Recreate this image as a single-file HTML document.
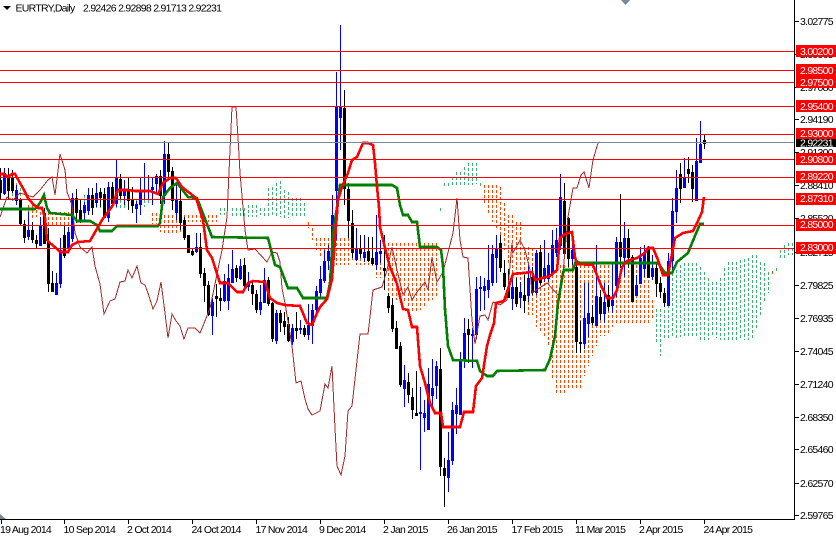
<!DOCTYPE html>
<html><head><meta charset="utf-8"><title>EURTRY,Daily</title>
<style>
html,body{margin:0;padding:0;background:#fff;width:836px;height:536px;overflow:hidden}
svg{display:block;position:absolute;left:0;top:0}
text{font-family:"Liberation Sans",sans-serif;font-size:10.5px;letter-spacing:-.72px;fill:#000}
.w text{fill:#fff}
.c{fill:none;stroke-width:1;stroke-dasharray:3 2;shape-rendering:crispEdges}
.l{fill:none;shape-rendering:crispEdges}
</style></head><body>
<svg width="836" height="536" viewBox="0 0 836 536" xmlns="http://www.w3.org/2000/svg">
<rect width="836" height="536" fill="#fff"/>
<!-- cloud -->
<path class="c" stroke="#ff4500" d="M28.5 205V220M32.5 205V220M36.5 210V217M40.5 212V225M44.5 212V225M48.5 212V225M52.5 212V225M56.5 212V225M60.5 212V225M64.5 212V225M68.5 212V225M72.5 212V223M152.5 213V224M156.5 213V224M160.5 215V232M164.5 215V235M168.5 215V235M172.5 215V235M176.5 215V235M180.5 215V232M184.5 215V225M188.5 215V222M192.5 215V222M196.5 215V222M200.5 215V222M204.5 215V222M208.5 215V222M212.5 215V222M216.5 215V222M308.5 222V228M312.5 228V240M316.5 238V250M320.5 238V257M324.5 238V260M328.5 238V265M332.5 238V265M336.5 238V265M340.5 238V265M344.5 238V265M348.5 238V265M352.5 238V260M356.5 238V265M360.5 238V265M364.5 238V265M368.5 238V265M372.5 238V267M376.5 242V278M380.5 242V278M384.5 242V287M388.5 243V293M392.5 243V297M396.5 243V300M400.5 243V302M404.5 243V303M408.5 243V307M412.5 243V312M416.5 243V312M420.5 243V310M424.5 243V307M428.5 243V303M432.5 243V300M436.5 243V298M484.5 185V205M488.5 185V213M492.5 185V222M496.5 185V230M500.5 187V240M504.5 203V250M508.5 215V265M512.5 215V273M516.5 222V280M520.5 222V285M524.5 247V293M528.5 247V315M532.5 248V315M536.5 250V327M540.5 253V332M544.5 263V338M548.5 267V345M552.5 265V380M556.5 265V394M560.5 265V394M564.5 265V394M568.5 265V388M572.5 265V388M576.5 265V388M580.5 265V388M584.5 265V376M588.5 265V366M592.5 265V356M596.5 265V346M600.5 265V336M604.5 265V336M608.5 265V333M612.5 265V327M616.5 265V323M620.5 265V323M624.5 265V323M628.5 265V323M632.5 265V323M636.5 265V323M640.5 265V323M644.5 265V323M648.5 265V323M652.5 300V318M772.5 271V274"/>
<path class="c" stroke="#3cb371" d="M12.5 183V203M16.5 183V203M20.5 183V203M84.5 195V215M88.5 195V213M92.5 190V212M96.5 190V210M100.5 190V210M104.5 190V208M108.5 185V207M112.5 195V210M116.5 197V208M120.5 200V208M124.5 200V208M128.5 200V208M132.5 200V206M136.5 200V206M140.5 200V206M144.5 200V207M148.5 200V205M220.5 208V215M224.5 208V215M232.5 208V216M236.5 208V216M240.5 208V216M244.5 208V217M248.5 205V217M252.5 205V217M256.5 205V217M260.5 208V215M264.5 208V216M268.5 188V217M272.5 187V215M276.5 183V217M280.5 181V217M284.5 190V218M288.5 192V218M292.5 198V218M296.5 198V218M300.5 198V217M304.5 203V217M440.5 208V211M444.5 183V186M448.5 183V186M452.5 177V186M456.5 172V186M460.5 172V186M464.5 167V186M468.5 163V185M472.5 163V185M476.5 163V184M480.5 183V186M656.5 309V342M660.5 309V356M664.5 310V340M668.5 290V340M672.5 273V338M676.5 270V338M680.5 265V337M684.5 263V337M688.5 263V336M692.5 263V336M696.5 263V337M700.5 267V340M704.5 272V340M708.5 278V340M712.5 282V336M716.5 282V338M720.5 278V340M724.5 268V340M728.5 262V340M732.5 262V340M736.5 262V340M740.5 260V340M744.5 259V340M748.5 258V340M752.5 255V340M756.5 255V330M760.5 262V315M764.5 263V302M768.5 272V293M776.5 268V272M780.5 250V258M784.5 245V258M788.5 243V255M792.5 243V255"/>
<!-- candles -->
<path class="l" stroke="#00f" d="M4.5 168V195M16.5 185V205M28.5 212V240M40.5 217V246M56.5 273V295M60.5 238V288M68.5 227V250M72.5 193V242M84.5 202V222M88.5 188V215M96.5 183V207M108.5 182V222M116.5 160V207M124.5 180V205M136.5 201V223M140.5 177V215M144.5 163V200M148.5 175V200M152.5 177V205M156.5 174V192M164.5 141V204M176.5 182V220M196.5 233V253M212.5 298V335M224.5 274V302M228.5 264V310M232.5 250V282M240.5 259V280M248.5 272V291M260.5 285V315M264.5 268V303M276.5 310V344M292.5 324V345M300.5 320V334M308.5 304V340M312.5 304V344M316.5 286V316M320.5 266V298M324.5 250V283M328.5 245V270M332.5 195V263M336.5 72V240M340.5 25V150M356.5 228V261M364.5 235V262M376.5 215V270M380.5 240V263M404.5 365V407M420.5 387V470M424.5 400V432M428.5 368V429M432.5 359V406M436.5 361V399M448.5 432V492M452.5 402V465M456.5 388V434M460.5 352V415M464.5 318V368M472.5 328V368M476.5 277V339M480.5 276V311M484.5 278V310M488.5 245V298M492.5 245V286M496.5 235V283M512.5 277V310M520.5 282V308M528.5 265V302M536.5 250V295M544.5 240V282M548.5 253V282M552.5 230V275M556.5 228V257M560.5 174V250M572.5 245V265M584.5 283V349M588.5 283V337M596.5 245V325M604.5 283V323M612.5 264V313M616.5 237V297M624.5 222V277M636.5 275V296M640.5 247V283M644.5 245V277M652.5 255V280M668.5 253V305M672.5 198V270M676.5 170V223M684.5 158V188M696.5 138V201M700.5 121V162"/>
<path class="l" stroke="#000" d="M0.5 168V200M8.5 168V200M12.5 170V193M20.5 198V225M24.5 220V243M32.5 222V243M36.5 235V248M44.5 208V243M48.5 228V292M52.5 271V292M64.5 225V258M76.5 189V223M80.5 200V223M92.5 188V215M100.5 188V207M104.5 188V218M112.5 182V205M120.5 174V200M128.5 178V210M132.5 187V213M160.5 170V204M168.5 143V178M172.5 167V210M180.5 188V230M184.5 217V240M188.5 235V253M192.5 248V256M200.5 233V278M204.5 268V302M208.5 281V316M216.5 284V317M220.5 288V311M236.5 265V282M244.5 258V290M252.5 282V305M256.5 290V313M268.5 277V306M272.5 302V342M280.5 310V332M284.5 312V335M288.5 317V342M296.5 312V339M304.5 325V337M344.5 90V205M348.5 183V238M352.5 210V258M360.5 235V258M368.5 237V262M372.5 237V265M384.5 235V290M388.5 293V313M392.5 298V332M396.5 321V349M400.5 342V387M408.5 373V403M412.5 388V419M416.5 371V416M440.5 348V476M444.5 458V507M468.5 319V363M500.5 235V272M504.5 260V290M508.5 269V298M516.5 278V307M524.5 275V313M532.5 267V295M540.5 245V285M564.5 183V255M568.5 217V267M576.5 265V353M580.5 321V353M592.5 305V325M600.5 290V320M608.5 285V311M620.5 194V268M628.5 229V268M632.5 255V301M648.5 246V278M656.5 263V297M660.5 277V298M664.5 288V307M680.5 163V203M688.5 157V183M692.5 165V202M704.5 135V149"/>
<path class="l" fill="#fff" stroke="#00f" d="M3.5 173.5h2V193.5h-2zM15.5 190.5h2V200.5h-2zM27.5 230.5h2V236.5h-2zM39.5 225.5h2V245.5h-2zM55.5 283.5h2V294.5h-2zM59.5 250.5h2V283.5h-2zM67.5 232.5h2V248.5h-2zM71.5 198.5h2V238.5h-2zM83.5 205.5h2V212.5h-2zM87.5 195.5h2V210.5h-2zM95.5 193.5h2V202.5h-2zM107.5 187.5h2V217.5h-2zM115.5 178.5h2V203.5h-2zM123.5 190.5h2V195.5h-2zM135.5 204.5h2V208.5h-2zM139.5 190.5h2V204.5h-2zM143.5 190.5h2V191.5h-2zM147.5 190.5h2V191.5h-2zM151.5 187.5h2V189.5h-2zM155.5 176.5h2V183.5h-2zM163.5 154.5h2V195.5h-2zM175.5 200.5h2V212.5h-2zM195.5 247.5h2V251.5h-2zM211.5 302.5h2V315.5h-2zM223.5 281.5h2V300.5h-2zM227.5 278.5h2V300.5h-2zM231.5 269.5h2V282.5h-2zM239.5 266.5h2V278.5h-2zM247.5 283.5h2V286.5h-2zM259.5 302.5h2V309.5h-2zM263.5 280.5h2V302.5h-2zM275.5 313.5h2V340.5h-2zM291.5 328.5h2V341.5h-2zM299.5 328.5h2V329.5h-2zM307.5 325.5h2V334.5h-2zM311.5 310.5h2V325.5h-2zM315.5 291.5h2V309.5h-2zM319.5 279.5h2V292.5h-2zM323.5 261.5h2V280.5h-2zM327.5 251.5h2V260.5h-2zM331.5 215.5h2V255.5h-2zM335.5 107.5h2V190.5h-2zM339.5 107.5h2V117.5h-2zM355.5 249.5h2V259.5h-2zM363.5 252.5h2V257.5h-2zM375.5 252.5h2V264.5h-2zM379.5 251.5h2V253.5h-2zM403.5 380.5h2V388.5h-2zM419.5 412.5h2V413.5h-2zM423.5 413.5h2V417.5h-2zM427.5 384.5h2V429.5h-2zM431.5 388.5h2V395.5h-2zM435.5 366.5h2V385.5h-2zM447.5 460.5h2V477.5h-2zM451.5 410.5h2V460.5h-2zM455.5 405.5h2V413.5h-2zM459.5 359.5h2V414.5h-2zM463.5 333.5h2V360.5h-2zM471.5 334.5h2V335.5h-2zM475.5 289.5h2V334.5h-2zM479.5 287.5h2V288.5h-2zM483.5 286.5h2V290.5h-2zM487.5 280.5h2V289.5h-2zM491.5 254.5h2V282.5h-2zM495.5 248.5h2V257.5h-2zM511.5 287.5h2V298.5h-2zM519.5 292.5h2V297.5h-2zM527.5 278.5h2V295.5h-2zM535.5 253.5h2V292.5h-2zM543.5 268.5h2V278.5h-2zM547.5 265.5h2V278.5h-2zM551.5 245.5h2V272.5h-2zM555.5 240.5h2V252.5h-2zM559.5 197.5h2V245.5h-2zM571.5 250.5h2V258.5h-2zM583.5 318.5h2V343.5h-2zM587.5 313.5h2V323.5h-2zM595.5 296.5h2V325.5h-2zM603.5 302.5h2V313.5h-2zM611.5 300.5h2V305.5h-2zM615.5 242.5h2V285.5h-2zM623.5 238.5h2V257.5h-2zM635.5 285.5h2V295.5h-2zM639.5 258.5h2V283.5h-2zM643.5 252.5h2V268.5h-2zM651.5 268.5h2V276.5h-2zM667.5 261.5h2V305.5h-2zM671.5 211.5h2V260.5h-2zM675.5 188.5h2V211.5h-2zM683.5 177.5h2V187.5h-2zM695.5 161.5h2V200.5h-2zM699.5 144.5h2V162.5h-2z"/>
<path class="l" fill="#f00" stroke="#000" d="M-0.5 180.5h2V192.5h-2zM7.5 175.5h2V190.5h-2zM11.5 178.5h2V190.5h-2zM19.5 200.5h2V223.5h-2zM23.5 224.5h2V237.5h-2zM31.5 230.5h2V239.5h-2zM35.5 240.5h2V243.5h-2zM43.5 213.5h2V243.5h-2zM47.5 241.5h2V283.5h-2zM51.5 283.5h2V291.5h-2zM63.5 235.5h2V255.5h-2zM75.5 198.5h2V212.5h-2zM79.5 210.5h2V220.5h-2zM91.5 195.5h2V207.5h-2zM99.5 192.5h2V197.5h-2zM103.5 194.5h2V217.5h-2zM111.5 187.5h2V203.5h-2zM119.5 179.5h2V195.5h-2zM127.5 190.5h2V200.5h-2zM131.5 200.5h2V205.5h-2zM159.5 176.5h2V195.5h-2zM167.5 154.5h2V171.5h-2zM171.5 171.5h2V200.5h-2zM179.5 201.5h2V222.5h-2zM183.5 220.5h2V237.5h-2zM187.5 235.5h2V252.5h-2zM191.5 251.5h2V254.5h-2zM199.5 247.5h2V273.5h-2zM203.5 273.5h2V285.5h-2zM207.5 285.5h2V314.5h-2zM215.5 296.5h2V298.5h-2zM219.5 298.5h2V300.5h-2zM235.5 268.5h2V277.5h-2zM243.5 265.5h2V285.5h-2zM251.5 285.5h2V293.5h-2zM255.5 294.5h2V309.5h-2zM267.5 280.5h2V303.5h-2zM271.5 303.5h2V338.5h-2zM279.5 313.5h2V322.5h-2zM283.5 321.5h2V326.5h-2zM287.5 324.5h2V340.5h-2zM295.5 328.5h2V330.5h-2zM303.5 328.5h2V334.5h-2zM343.5 108.5h2V188.5h-2zM347.5 189.5h2V220.5h-2zM351.5 223.5h2V252.5h-2zM359.5 249.5h2V253.5h-2zM367.5 251.5h2V260.5h-2zM371.5 258.5h2V263.5h-2zM383.5 268.5h2V270.5h-2zM387.5 296.5h2V307.5h-2zM391.5 305.5h2V328.5h-2zM395.5 328.5h2V348.5h-2zM399.5 346.5h2V384.5h-2zM407.5 382.5h2V394.5h-2zM411.5 397.5h2V409.5h-2zM415.5 413.5h2V415.5h-2zM439.5 369.5h2V466.5h-2zM443.5 468.5h2V475.5h-2zM467.5 329.5h2V334.5h-2zM499.5 243.5h2V267.5h-2zM503.5 273.5h2V286.5h-2zM507.5 287.5h2V297.5h-2zM515.5 287.5h2V303.5h-2zM523.5 295.5h2V300.5h-2zM531.5 277.5h2V292.5h-2zM539.5 252.5h2V282.5h-2zM563.5 201.5h2V253.5h-2zM567.5 218.5h2V258.5h-2zM575.5 267.5h2V341.5h-2zM579.5 342.5h2V343.5h-2zM591.5 317.5h2V322.5h-2zM599.5 297.5h2V313.5h-2zM607.5 295.5h2V306.5h-2zM619.5 242.5h2V256.5h-2zM627.5 238.5h2V257.5h-2zM631.5 257.5h2V301.5h-2zM647.5 247.5h2V277.5h-2zM655.5 268.5h2V283.5h-2zM659.5 283.5h2V291.5h-2zM663.5 293.5h2V302.5h-2zM679.5 174.5h2V188.5h-2zM687.5 169.5h2V173.5h-2zM691.5 172.5h2V188.5h-2zM703.5 140.5h2V143.5h-2z"/>
<!-- chikou -->
<path class="l" stroke="#a52a2a" d="M0 217L7 197L13 200L20 193L33 197L40 190L48 180L52 177L55 195L60 154L65 170L67 192L72 205L75 233L80 247L87 253L92 247L95 266L100 284L104 314L110 301L115 299L120 282L125 281L128 270L132 278L137 266L141 283L145 285L148 293L153 309L157 301L161 282L165 313L168 338L172 314L176 321L180 326L184 339L188 328L195 328L200 333L205 321L210 308L215 284L218 269L222 250L227 217L230 150L232 107L236 107L238 137L240 173L245 230L248 250L255 249L267 262L272 252L277 253L280 262L282 288L285 303L292 346L296 383L301 381L305 399L308 409L312 415L320 411L325 384L328 388L332 366L335 428L337 466L341 475L345 456L348 411L352 406L360 334L368 334L370 317L373 290L382 287L387 270L392 247L397 270L403 295L408 287L412 300L417 292L425 282L428 290L432 257L437 282L443 272L453 233L457 198L460 240L463 257L468 258L472 320L475 344L480 316L485 315L488 320L493 302L500 305L507 300L512 243L513 253L520 240L525 250L530 270L532 293L547 283L560 297L563 273L568 217L573 188L577 188L581 175L584 172L589 188L593 160L598 143L600 142"/>
<!-- kijun -->
<path class="l" stroke="#008000" stroke-width="2.6" d="M0 209L35 209L40 203L44 195L47 208L50 213L72 215L77 221L90 221L97 225L100 231L112 231L117 226L158 226L160 223L163 197L170 188L177 183L188 197L197 198L212 237L268 238L275 265L280 267L288 288L297 288L303 298L327 298L330 283L333 233L337 207L340 185L392 185L397 188L400 205L403 215L408 215L412 222L417 222L420 247L437 247L441 250L443 266L445 309L448 346L453 360L477 361L480 371L487 376L493 376L497 371L545 370L550 359L555 336L558 303L563 273L564 270L573 270L576 261L580 263L658 263L665 273L672 273L677 262L688 253L692 243L700 224L704 224"/>
<!-- tenkan -->
<path class="l" stroke="#f00" stroke-width="2.6" d="M0 174L4 174L8 177L12 174L15 174L20 183L24 190L28 198L33 204L38 208L42 208L45 218L47 240L50 243L56 248L60 252L68 252L72 245L78 242L90 241L94 234L102 220L108 212L113 205L116 195L118 190L128 190L135 191L150 191L158 194L163 183L170 178L176 178L182 187L196 198L203 220L207 250L212 258L220 283L228 283L237 292L243 292L248 283L253 281L265 282L270 298L277 303L285 305L300 306L307 323L312 325L317 313L320 307L327 299L332 279L335 240L338 200L342 187L348 173L352 160L357 157L363 143L368 143L373 145L375 163L377 187L379 207L380 227L385 248L390 267L397 284L403 309L408 310L412 327L417 327L420 366L425 383L430 403L435 413L441 413L443 427L460 427L464 412L473 412L476 386L482 378L487 346L490 335L494 323L496 303L504 301L512 277L513 274L532 272L535 280L550 276L557 270L560 238L565 234L572 232L575 257L577 264L593 265L600 283L607 298L613 298L617 290L622 267L627 261L637 258L645 253L648 248L653 248L658 260L663 275L668 275L675 238L683 233L693 231L697 223L702 212L704 197"/>
<!-- levels -->
<path class="l" stroke="#778899" d="M0 142.5H794"/>
<path class="l" stroke="#f00" d="M0 51.5H794M0 70.5H794M0 82.5H794M0 106.5H794M0 134.5H794M0 159.5H794M0 177.5H794M0 199.5H794M0 225.5H794M0 248.5H794"/>
<!-- frame -->
<path class="l" stroke="#000" d="M794.5 0V519.5M0 519.5H795M795 21.5h4M795 54.5h4M795 87.5h4M795 119.5h4M795 152.5h4M795 185.5h4M795 218.5h4M795 252.5h4M795 285.5h4M795 318.5h4M795 351.5h4M795 384.5h4M795 417.5h4M795 449.5h4M795 483.5h4M795 515.5h4M1.5 520v4M64.5 520v4M128.5 520v4M192.5 520v4M256.5 520v4M320.5 520v4M384.5 520v4M448.5 520v4M512.5 520v4M576.5 520v4M640.5 520v4M704.5 520v4"/>
<path d="M0 514L6 519H0Z" fill="#778899"/>
<path d="M621 0H630L625.5 5Z" fill="#778899"/>
<path d="M3 6H11L7 10Z" fill="#000"/>
<text x="15.5" y="11.500">EURTRY,Daily</text>
<text x="83" y="11.500">2.92426 2.92898 2.91713 2.92231</text>
<!-- axis labels -->
<text x="800" y="25">3.02775</text><text x="800" y="58">2.99965</text><text x="800" y="91">2.97080</text><text x="800" y="123">2.94190</text><text x="800" y="156">2.91300</text><text x="800" y="189">2.88410</text><text x="800" y="222">2.85520</text><text x="800" y="256">2.82715</text><text x="800" y="289">2.79825</text><text x="800" y="322">2.76935</text><text x="800" y="355">2.74045</text><text x="800" y="388">2.71240</text><text x="800" y="421">2.68350</text><text x="800" y="453">2.65460</text><text x="800" y="487">2.62570</text><text x="800" y="519">2.59765</text>
<text x="0" y="533">19 Aug 2014</text><text x="63.500" y="533">10 Sep 2014</text><text x="127" y="533">2 Oct 2014</text><text x="191.500" y="533">24 Oct 2014</text><text x="255.500" y="533">17 Nov 2014</text><text x="319" y="533">9 Dec 2014</text><text x="383" y="533">2 Jan 2015</text><text x="447" y="533">26 Jan 2015</text><text x="511.500" y="533">17 Feb 2015</text><text x="575" y="533">11 Mar 2015</text><text x="639" y="533">2 Apr 2015</text><text x="703.500" y="533">24 Apr 2015</text>
<!-- red labels -->
<g fill="#f00">
<rect x="796" y="45" width="40" height="12"/><rect x="796" y="64" width="40" height="12"/><rect x="796" y="76" width="40" height="12"/><rect x="796" y="100" width="40" height="12"/><rect x="796" y="128" width="40" height="11"/><rect x="796" y="153" width="40" height="12"/><rect x="796" y="171" width="40" height="12"/><rect x="796" y="193" width="40" height="12"/><rect x="796" y="219" width="40" height="12"/><rect x="796" y="242" width="40" height="12"/>
</g>
<rect x="796" y="139" width="40" height="8" fill="#000"/>
<g class="w">
<text x="800" y="55">3.00200</text><text x="800" y="74">2.98500</text><text x="800" y="86">2.97500</text><text x="800" y="110">2.95400</text><text x="800" y="137">2.93000</text><text x="800" y="146.500">2.92231</text><text x="800" y="163">2.90800</text><text x="800" y="180">2.89220</text><text x="800" y="202">2.87310</text><text x="800" y="228">2.85000</text><text x="800" y="251">2.83000</text>
</g>
</svg>
</body></html>
